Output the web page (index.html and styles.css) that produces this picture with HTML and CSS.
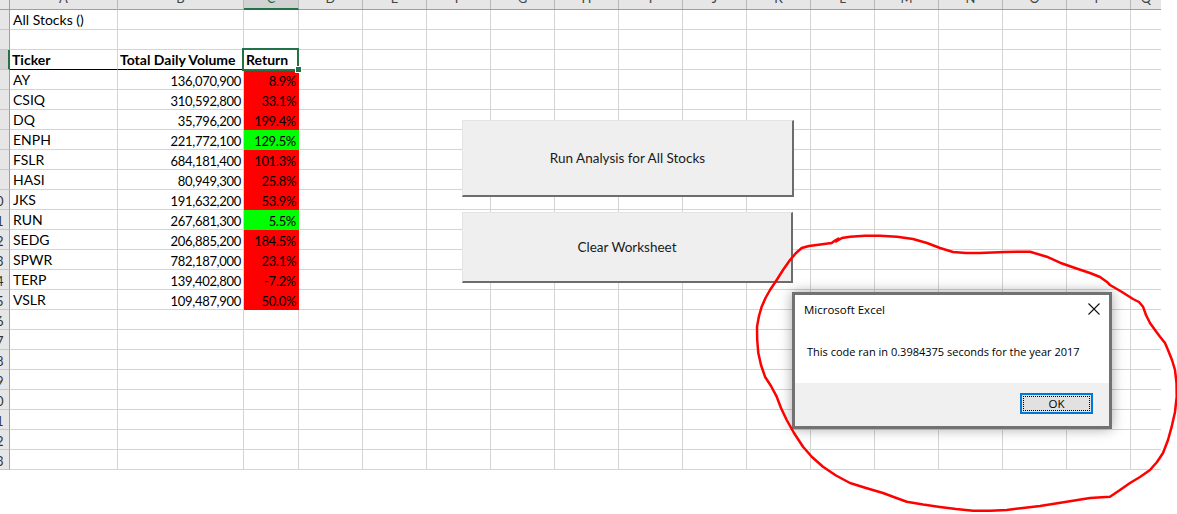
FILE: index.html
```html
<!DOCTYPE html>
<html>
<head>
<meta charset="utf-8">
<title>Excel - All Stocks</title>
<link rel="stylesheet" href="styles.css">
</head>
<body>
<div class="sheet">
  <div class="grid">
    <div class="ch corner"></div>
    <div class="ch"><span>A</span></div>
    <div class="ch"><span>B</span></div>
    <div class="ch sel-col"><span>C</span></div>
    <div class="ch rest-h">
      <div class="lh"><span>D</span></div><div class="lh"><span>E</span></div><div class="lh"><span>F</span></div><div class="lh"><span>G</span></div><div class="lh"><span>H</span></div><div class="lh"><span>I</span></div><div class="lh"><span>J</span></div><div class="lh"><span>K</span></div><div class="lh"><span>L</span></div><div class="lh"><span>M</span></div><div class="lh"><span>N</span></div><div class="lh"><span>O</span></div><div class="lh"><span>P</span></div><div class="lh last"><span>Q</span></div>
    </div>

    <div class="rh"><span>1</span></div><div class="c t">All Stocks ()</div><div class="c"></div><div class="c"></div><div class="c rest"></div>
    <div class="rh"><span>2</span></div><div class="c"></div><div class="c"></div><div class="c"></div><div class="c rest"></div>
    <div class="rh sel-row"><span>3</span></div><div class="c t b under">Ticker</div><div class="c t b under">Total Daily Volume</div><div class="c t b active">Return<i class="frame"></i><i class="handle"></i></div><div class="c rest"></div>
    <div class="rh"><span>4</span></div><div class="c t">AY</div><div class="c n">136,070,900</div><div class="c n red">8.9%</div><div class="c rest"></div>
    <div class="rh"><span>5</span></div><div class="c t">CSIQ</div><div class="c n">310,592,800</div><div class="c n red">33.1%</div><div class="c rest"></div>
    <div class="rh"><span>6</span></div><div class="c t">DQ</div><div class="c n">35,796,200</div><div class="c n red">199.4%</div><div class="c rest"></div>
    <div class="rh"><span>7</span></div><div class="c t">ENPH</div><div class="c n">221,772,100</div><div class="c n green">129.5%</div><div class="c rest"></div>
    <div class="rh"><span>8</span></div><div class="c t">FSLR</div><div class="c n">684,181,400</div><div class="c n red">101.3%</div><div class="c rest"></div>
    <div class="rh"><span>9</span></div><div class="c t">HASI</div><div class="c n">80,949,300</div><div class="c n red">25.8%</div><div class="c rest"></div>
    <div class="rh"><span>10</span></div><div class="c t">JKS</div><div class="c n">191,632,200</div><div class="c n red">53.9%</div><div class="c rest"></div>
    <div class="rh"><span>11</span></div><div class="c t">RUN</div><div class="c n">267,681,300</div><div class="c n green">5.5%</div><div class="c rest"></div>
    <div class="rh"><span>12</span></div><div class="c t">SEDG</div><div class="c n">206,885,200</div><div class="c n red">184.5%</div><div class="c rest"></div>
    <div class="rh"><span>13</span></div><div class="c t">SPWR</div><div class="c n">782,187,000</div><div class="c n red">23.1%</div><div class="c rest"></div>
    <div class="rh"><span>14</span></div><div class="c t">TERP</div><div class="c n">139,402,800</div><div class="c n red">-7.2%</div><div class="c rest"></div>
    <div class="rh"><span>15</span></div><div class="c t">VSLR</div><div class="c n">109,487,900</div><div class="c n red">50.0%</div><div class="c rest"></div>
    <div class="rh"><span>16</span></div><div class="c"></div><div class="c"></div><div class="c"></div><div class="c rest"></div>
    <div class="rh"><span>17</span></div><div class="c"></div><div class="c"></div><div class="c"></div><div class="c rest"></div>
    <div class="rh"><span>18</span></div><div class="c"></div><div class="c"></div><div class="c"></div><div class="c rest"></div>
    <div class="rh"><span>19</span></div><div class="c"></div><div class="c"></div><div class="c"></div><div class="c rest"></div>
    <div class="rh"><span>20</span></div><div class="c"></div><div class="c"></div><div class="c"></div><div class="c rest"></div>
    <div class="rh"><span>21</span></div><div class="c"></div><div class="c"></div><div class="c"></div><div class="c rest"></div>
    <div class="rh"><span>22</span></div><div class="c"></div><div class="c"></div><div class="c"></div><div class="c rest"></div>
    <div class="rh"><span>23</span></div><div class="c"></div><div class="c"></div><div class="c"></div><div class="c rest"></div>
  </div>

  <button class="shape-btn run-btn">Run Analysis for All Stocks</button>
  <button class="shape-btn clear-btn">Clear Worksheet</button>

  <div class="msgbox">
    <div class="msg-body">
      <div class="msg-title">
        <span>Microsoft Excel</span>
        <svg class="close" width="12" height="12" viewBox="0 0 12 12"><path d="M0.5 0.5 L11.5 11.5 M11.5 0.5 L0.5 11.5" stroke="#111" stroke-width="1.1" fill="none"/></svg>
      </div>
      <div class="msg-text">This code ran in 0.3984375 seconds for the year 2017</div>
    </div>
    <div class="msg-foot">
      <button class="ok-btn"><span>OK</span></button>
    </div>
  </div>

  <svg class="scribble" width="1177" height="514" viewBox="0 0 1177 514">
    <polyline fill="none" stroke="#ff0000" stroke-width="2.5" stroke-linejoin="round" stroke-linecap="round"
      points="776.7,280 783,270 790,260 796,253 801.7,248 809,246 816.7,245 824,244 831.7,243 835,240.5 838.5,238.5 836,241.5 842,238 850,236.7 865,235.8 880,235.7 897,236.8 913,239 927,243 940,248 953,252 966,253 980,253 1005,252 1030,251.7 1046.7,256.7 1060,262.7 1075,268 1090,273 1100,277 1106.7,281.7 1110,285 1122,292 1133,299 1139,302 1143,306.7 1146,315 1150,323 1155,330 1160,336.7 1165,343 1168,350 1172,360 1175,370 1176.5,383 1176.7,396.7 1175,412 1171.7,426.7 1168,440 1163,453 1157,462 1150,470 1140,477 1130,483 1120,490 1110,496.7 1090,498 1066.7,501.7 1040,506 1023,508 1006.7,510 990,510.7 973,510.7 956,509 940,507 923,504.5 906.7,501.7 895,497.5 883,493 866,488 850,483 836,475.5 823,466.7 812,457 803,446.7 794,433 786.7,420 781,408 776.7,396.7 771,386 765,376.7 761,365 758.3,353 757.2,340 757,326.7 759,316 761.7,306.7 765.5,298 770,290 776.7,280"/>
  </svg>
</div>
</body>
</html>
```

FILE: styles.css
```css
html, body {
  margin: 0;
  padding: 0;
  background: #ffffff;
}

.sheet {
  position: relative;
  width: 1177px;
  height: 514px;
  overflow: hidden;
  background: #ffffff;
  font-family: Lato, "Open Sans", sans-serif;
  color: #000;
}

.grid {
  display: grid;
  grid-template-columns: 10px 108px 126px 55px 862px;
  grid-template-rows: 10px repeat(23, 20px);
  width: 1161px;
}

.grid > div {
  box-sizing: border-box;
  overflow: hidden;
  white-space: nowrap;
}

/* column headers */
.ch {
  background: #e6e6e6;
  border-right: 1px solid #b8b8b8;
  border-bottom: 1px solid #9e9e9e;
  text-align: center;
  font-size: 13px;
  color: #444;
}
.ch span,
.lh span {
  display: block;
  line-height: 14px;
  margin-top: -9px;
}
.ch.corner {
  border-right-color: #9e9e9e;
}
.ch.sel-col {
  background: #d2d2d2;
  border-bottom: 2px solid #217346;
  color: #1e6b41;
}
.ch.rest-h {
  display: flex;
  border-right: none;
}
.lh {
  box-sizing: border-box;
  width: 64px;
  flex: none;
  border-right: 1px solid #b8b8b8;
  overflow: hidden;
}
.lh.last {
  width: 30px;
  border-right: none;
}

/* row headers */
.rh {
  background: #e6e6e6;
  border-right: 1px solid #9e9e9e;
  border-bottom: 1px solid #c6c6c6;
  font-size: 13px;
  color: #333;
}
.rh span {
  display: block;
  width: 24px;
  margin-left: -16px;
  text-align: center;
  line-height: 16px;
  padding-top: 3px;
}
.rh.sel-row {
  background: #d2d2d2;
  border-right: 2px solid #217346;
}

/* cells */
.c {
  border-right: 1px solid #d4d4d4;
  border-bottom: 1px solid #d4d4d4;
  font-size: 14px;
  line-height: 16px;
  padding: 2px 2px 0 3px;
}
.c.t { text-align: left; }
.c.b { font-weight: 700; padding-left: 2px; }
.c.n {
  text-align: right;
  font-size: 13px;
  letter-spacing: -0.3px;
  padding-right: 2px;
  padding-top: 3px;
}
.c.under {
  border-bottom-color: #000;
}
.c.red {
  background: #ff0000;
  border-color: #ff0000;
}
.c.green {
  background: #00ff00;
  border-color: #00ff00;
}
.c.rest {
  border-right: none;
  background: repeating-linear-gradient(to right, transparent 0 63px, #d4d4d4 63px 64px);
}
.grid > .c.active {
  position: relative;
  overflow: visible;
  z-index: 2;
}
.frame {
  position: absolute;
  left: -2px;
  top: -2px;
  right: -1px;
  bottom: -2px;
  border: 2px solid #217346;
  box-sizing: border-box;
}
.handle {
  position: absolute;
  right: -3px;
  bottom: -3px;
  width: 5px;
  height: 5px;
  background: #217346;
  box-shadow: 0 0 0 1px #ffffff;
}

/* shape buttons */
.shape-btn {
  position: absolute;
  left: 462px;
  box-sizing: border-box;
  background: #efefef;
  border-top: 1px solid #e4e4e4;
  border-left: 1px solid #e4e4e4;
  border-right: 2px solid #6c6c6c;
  border-bottom: 2px solid #6c6c6c;
  font-family: Lato, "Open Sans", sans-serif;
  font-size: 13.5px;
  color: #1a1a1a;
  padding: 0;
  margin: 0;
}
.run-btn {
  top: 120px;
  width: 332px;
  height: 77px;
}
.clear-btn {
  top: 212px;
  width: 331px;
  height: 71px;
}

/* message box */
.msgbox {
  position: absolute;
  left: 792px;
  top: 292px;
  width: 320px;
  height: 137px;
  box-sizing: border-box;
  border: 3px solid #727272;
  background: #ffffff;
  box-shadow: 0 0 12px rgba(0, 0, 0, 0.35);
  display: flex;
  flex-direction: column;
  font-family: "Open Sans", "Noto Sans", sans-serif;
  font-size: 11px;
  color: #000;
}
.msg-body {
  height: 88px;
  background: #ffffff;
}
.msg-title {
  display: flex;
  align-items: center;
  justify-content: space-between;
  height: 28px;
  padding: 0 9px 0 9px;
}
.msg-title span {
  font-size: 11.5px;
}
.close {
  display: block;
}
.msg-text {
  padding: 21px 0 0 12px;
  line-height: 16px;
}
.msg-foot {
  flex: 1;
  background: #f0f0f0;
  display: flex;
  justify-content: flex-end;
  align-items: flex-start;
  padding: 10px 16px 0 0;
}
.ok-btn {
  width: 73px;
  height: 21px;
  box-sizing: border-box;
  border: 2px solid #0078d7;
  background: #e1e1e1;
  padding: 1px;
  margin: 0;
  font-family: "Open Sans", "Noto Sans", sans-serif;
  font-size: 11.5px;
  color: #000;
  display: flex;
}
.ok-btn span {
  flex: 1;
  border: 1px dotted #000;
  display: flex;
  align-items: center;
  justify-content: center;
  line-height: 13px;
}

.scribble {
  position: absolute;
  left: 0;
  top: 0;
  pointer-events: none;
}
```
